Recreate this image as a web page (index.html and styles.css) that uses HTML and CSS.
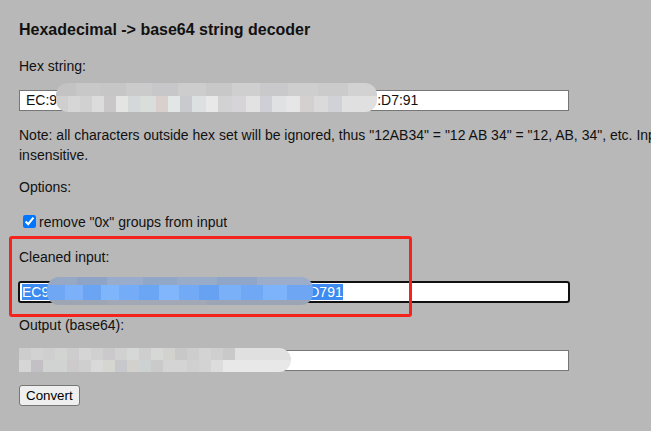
FILE: index.html
```html
<!DOCTYPE html>
<html lang="en">
<head>
  <meta charset="UTF-8" />
  <meta name="viewport" content="width=device-width, initial-scale=1" />
  <title>Hexadecimal -> base64 string decoder</title>
  <link rel="stylesheet" href="styles.css">
</head>
<body>

<h1 class="title">Hexadecimal -&gt; base64 string decoder</h1>

<div class="label">Hex string:</div>
<div class="field hex-field">
  EC:9<span class="gap hex-gap"></span>:D7:91
  <span class="blur blur-hex"></span>
</div>

<p class="note">Note: all characters outside hex set will be ignored, thus "12AB34" = "12 AB 34" = "12, AB, 34", etc. Input is case insensitive.</p>

<div class="label options">Options:</div>
<label class="check-row"><input type="checkbox" checked>remove "0x" groups from input</label>

<div class="label">Cleaned input:</div>
<div class="field clean-field">
  <span class="selected">EC9<span class="gap clean-gap"></span>D791</span>
  <span class="blur blur-clean"></span>
</div>

<div class="label output">Output (base64):</div>
<div class="field out-field">
  <span class="blur blur-out"></span>
</div>

<button class="convert">Convert</button>

<!-- annotation frame -->
<div class="marker"></div>

</body>
</html>
```

FILE: styles.css
```css
html {
  overflow: hidden;
}

body {
  margin: 0;
  padding: 20px 0 0 19px;
  background: #b8b8b8;
  color: #111;
  font-family: "Liberation Sans", Arial, sans-serif;
  font-size: 14px;
  line-height: 20px;
}

.title {
  font-size: 16px;
  font-weight: bold;
  line-height: 20px;
  margin: 0 0 16px;
}

.label {
  margin-bottom: 14px;
}

.label.options {
  margin-bottom: 15px;
}

.label.output {
  margin-bottom: 15px;
}

.field {
  position: relative;
  box-sizing: border-box;
  width: 550px;
  height: 21px;
  background: white;
  border: 1px solid #767676;
  line-height: 19px;
  white-space: nowrap;
  margin-bottom: 14px;
}

.hex-field {
  padding-left: 6px;
}

.clean-field {
  width: 552px;
  height: 22px;
  margin: 0 0 12px -1px;
  border: 2px solid #101010;
  border-radius: 3px;
  line-height: 18px;
  padding-left: 2px;
}

.gap {
  display: inline-block;
}

.hex-gap {
  width: 320px;
}

.clean-gap {
  width: 260px;
}

.selected {
  background: #3d8af0;
  color: white;
}

.note {
  width: 740px;
  margin: 0 0 12px;
}

.check-row {
  display: block;
  margin-bottom: 15px;
}

.check-row input {
  width: 13px;
  height: 13px;
  margin: 3px 3px 0 4px;
  vertical-align: -1px;
}

.convert {
  font-family: "Liberation Sans", Arial, sans-serif;
  font-size: 13.33px;
  height: 21px;
  padding: 1px 6px;
  margin: 0;
  background: #efefef;
  color: #000;
  border: 1px solid #767676;
  border-radius: 3px;
}

/* pixelated patches that hide the data */
.blur {
  position: absolute;
  filter: blur(0.6px);
}

.blur-hex {
  left: 36px;
  top: -8px;
  width: 321px;
  height: 29px;
  border-radius: 12px;
  background:
    linear-gradient(90deg, #c3c3c3 0 20px, #c9c8c8 20px 44px, #c6c6c6 44px 70px, #cbcbcb 70px 96px, #c7c6c8 96px 122px, #cdcdcd 122px 150px, #c8c8c8 150px 176px, #cfcfcf 176px 204px, #c9c9cb 204px 232px, #cecece 232px 262px, #cbcbcb 262px 292px, #d2d2d2 292px) top / 100% 13px no-repeat,
    linear-gradient(90deg, #cfcfcf 0 12px, #d6d6d6 12px 24px, #d2d1d1 24px 36px, #dcdcdc 36px 48px, #c9c7c7 48px 60px, #e4e4e2 60px 72px, #d4d8d8 72px 84px, #dadedb 84px 100px, #d9d0ce 100px 112px, #e3e6e6 112px 124px, #c8cacd 124px 136px, #dde0e0 136px 150px, #e8e8e8 150px 162px, #d2d2d2 162px 176px, #d6d4d8 176px 190px, #e2e2e2 190px 204px, #cfd0d6 204px 216px, #dfe1e3 216px 230px, #e6e6e6 230px 244px, #d4d0cf 244px 258px, #dadada 258px 272px, #d0d2d8 272px 286px, #e0e0e0 286px) bottom / 100% 16px no-repeat;
}

.blur-clean {
  left: 27px;
  top: -6px;
  width: 266px;
  height: 28px;
  border-radius: 12px;
  background:
    linear-gradient(90deg, #96a8c4 0 30px, #8ea4c6 30px 60px, #9aaccb 60px 96px, #91a7c8 96px 130px, #98abc9 130px 170px, #8fa6c8 170px 210px, #9badca 210px) top / 100% 8px no-repeat,
    linear-gradient(90deg, #6fa7f4 0 18px, #7cb1f9 18px 36px, #6aa4f3 36px 54px, #7fb5fb 54px 72px, #74acf7 72px 92px, #6ba6f5 92px 112px, #81b6fc 112px 132px, #72aaf6 132px 152px, #66a1f2 152px 172px, #7ab0f8 172px 194px, #70a8f5 194px 216px, #7db3fa 216px 240px, #6ea6f4 240px) 0 8px / 100% 15px no-repeat,
    linear-gradient(90deg, #9ea6b4 0 60px, #a2a8b6 60px 160px, #9ca5b5 160px) bottom / 100% 5px no-repeat;
}

.blur-out {
  left: -1px;
  top: -3px;
  width: 272px;
  height: 24px;
  border-radius: 0 12px 12px 0;
  background:
    linear-gradient(90deg, #cdcdcd 0 12px, #d2d2d2 12px 24px, #cfcfcf 24px 36px, #d2d4d1 36px 48px, #cdcdcd 48px 60px, #d5d5d5 60px 72px, #d0d0d0 72px 84px, #cbc9cc 84px 96px, #d1d1d1 96px 108px, #d6d8d8 108px 120px, #cecece 120px 132px, #d6d8d6 132px 144px, #d2d2cf 144px 156px, #c8c8c8 156px 168px, #cdcdcd 168px 180px, #d3d3d3 180px 192px, #cfcfcf 192px 204px, #c9c9c9 204px 216px, #e0e0e0 216px) top / 100% 12px no-repeat,
    linear-gradient(90deg, #d6d6d6 0 12px, #c3c0c5 12px 24px, #d0d3d2 24px 48px, #cdcacb 48px 60px, #cfcfd0 60px 72px, #dad9da 72px 84px, #d4d6cf 84px 96px, #c6c8cb 96px 108px, #d2d1ce 108px 120px, #ccd2d2 120px 132px, #c9cac9 132px 144px, #d4d4d4 144px 168px, #d0d0d0 168px 180px, #d3d3d3 180px 192px, #dcdcdc 192px 204px, #e8e8e8 204px) bottom / 100% 12px no-repeat;
}

.marker {
  position: absolute;
  left: 9px;
  top: 236px;
  width: 403px;
  height: 81px;
  box-sizing: border-box;
  border: 3px solid #f4231b;
  border-radius: 3px;
}
```
